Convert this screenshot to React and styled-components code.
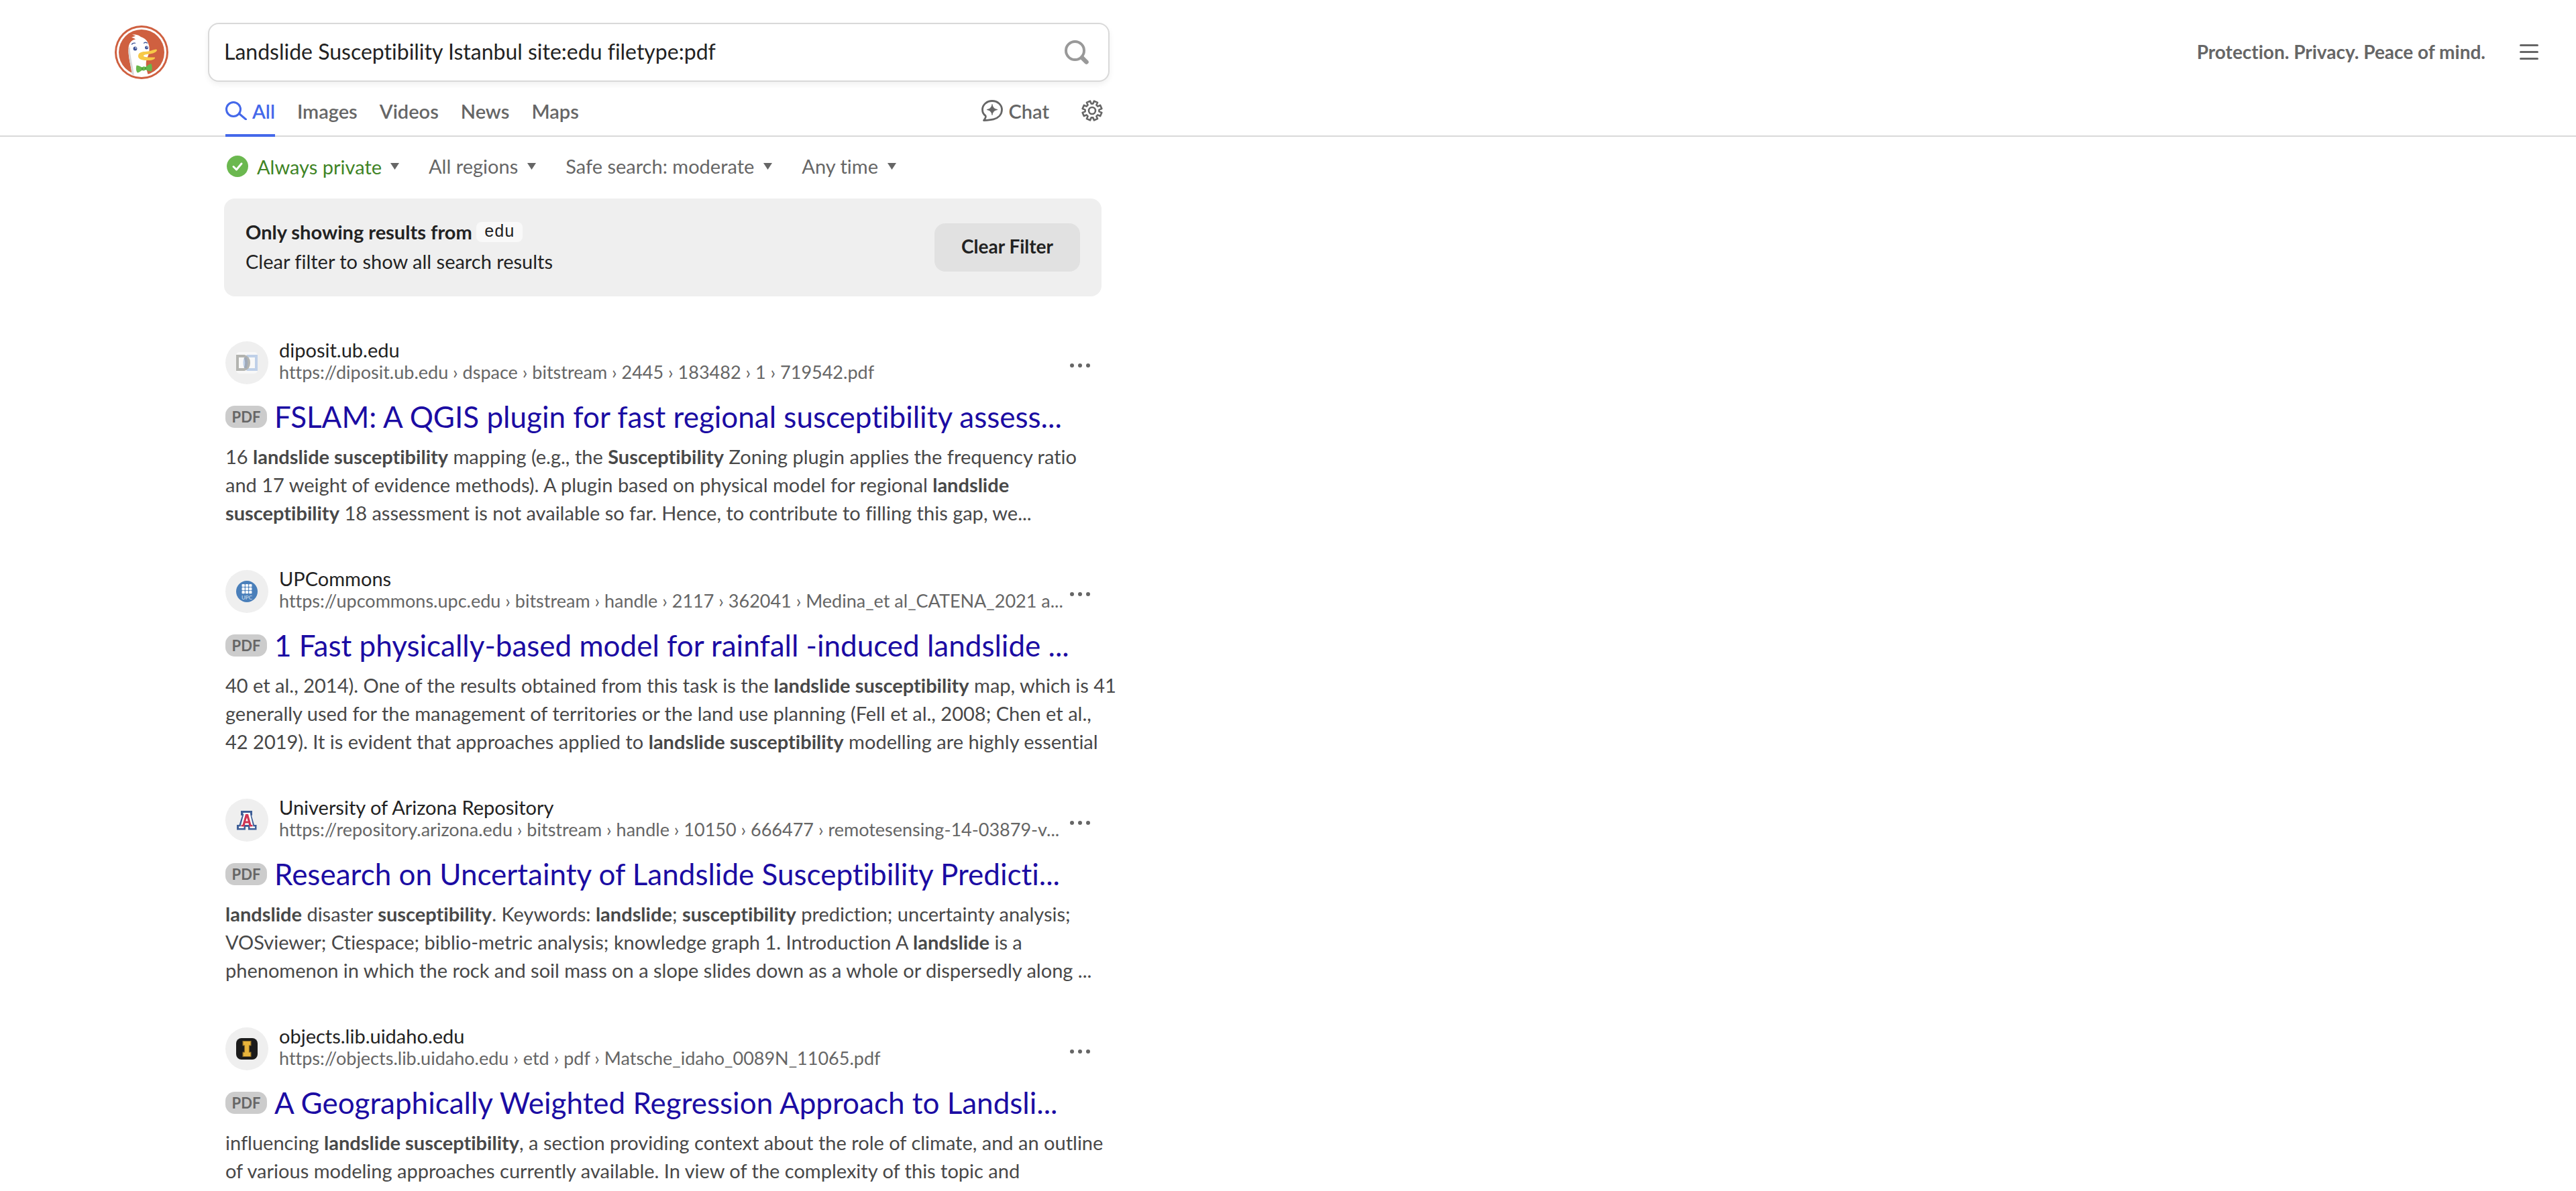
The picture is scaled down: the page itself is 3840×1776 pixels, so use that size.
import React from "react";
import styled, { createGlobalStyle } from "styled-components";

const GlobalStyle = createGlobalStyle`
  *, *::before, *::after { box-sizing: border-box; }
  body {
    margin: 0;
    background: #fff;
    color: #222;
    font-family: Lato, "Liberation Sans", sans-serif;
    font-size: 29px;
    font-variant-ligatures: none;
  }
  button, input, select {
    font: inherit;
    font-variant-ligatures: none;
    color: inherit;
  }
  button {
    padding: 0;
    border: 0;
    background: none;
    cursor: pointer;
  }
  a { color: inherit; text-decoration: none; }
  svg { display: block; flex: none; }
`;

/* ---------- header ---------- */

const Header = styled.header`
  padding: 34px 56px 0 171px;
  border-bottom: 2px solid #d9d9d9;
`;

const TopBar = styled.div`
  display: flex;
  align-items: center;
`;

const LogoLink = styled.a`
  flex: none;
  margin-right: 59px;
`;

const SearchForm = styled.form`
  display: flex;
  align-items: center;
  flex: 1;
  max-width: 1344px;
  height: 88px;
  padding: 0 29px 0 22px;
  border: 2px solid #d9d9d9;
  border-radius: 16px;
  background: #fff;
  box-shadow: 0 4px 8px rgba(0, 0, 0, 0.06);
`;

const SearchInput = styled.input`
  flex: 1;
  min-width: 0;
  padding: 0 0 2px;
  border: 0;
  outline: 0;
  background: none;
  font-size: 32px;
  line-height: 40px;
`;

const SiteMenu = styled.div`
  display: flex;
  align-items: center;
  gap: 51px;
  margin-left: auto;
  color: #666;
`;

const Tagline = styled.a`
  padding-bottom: 2px;
  font-size: 28px;
  font-weight: 700;
  line-height: 36px;
  white-space: nowrap;
`;

const TabBar = styled.div`
  display: flex;
  justify-content: space-between;
  max-width: 1473px;
  height: 82px;
  margin-bottom: -2px;
  padding-left: 165px;
  color: #666;
`;

const TabGroup = styled.nav`
  display: flex;
  gap: ${(p) => p.$gap}px;
`;

const Tab = styled.a`
  display: flex;
  align-items: center;
  gap: 8px;
  padding-top: 4px;
  font-size: 29px;
  font-weight: 600;
  color: ${(p) => (p.$active ? "#4468ea" : "#666")};
  box-shadow: ${(p) => (p.$active ? "inset 0 -4px #4468ea" : "none")};
`;

/* ---------- filters ---------- */

const Main = styled.main`
  max-width: 1642px;
  padding-left: 334px;
`;

const FilterBar = styled.div`
  display: flex;
  align-items: center;
  gap: 44px;
  height: 88px;
  margin-bottom: 4px;
  padding: 0 4px;
  color: #666;
`;

const PrivacyButton = styled.button`
  display: flex;
  align-items: center;
  gap: 13px;
  color: #3f8426;
`;

const DropDown = styled.label`
  display: flex;
  align-items: center;
  gap: 14px;
`;

const Select = styled.select`
  appearance: none;
  field-sizing: content;
  padding: 0;
  border: 0;
  background: none;
  line-height: 36px;
  cursor: pointer;
`;

/* ---------- site notice ---------- */

const Notice = styled.section`
  display: flex;
  align-items: center;
  justify-content: space-between;
  min-height: 146px;
  padding: 0 32px;
  border-radius: 16px;
  background: #efefef;
`;

const NoticeText = styled.div`
  padding-bottom: 2px;
  line-height: 44px;
`;

const NoticeLine = styled.div`
  display: flex;
  align-items: center;
  gap: 6px;
`;

const SiteChip = styled.code`
  padding: 2px 12px 0;
  border-radius: 8px;
  background: #f9f9f9;
  font-family: "Liberation Mono", monospace;
  font-size: 25px;
  line-height: 28px;
`;

const ClearButton = styled.button`
  height: 72px;
  padding: 0 40px 4px;
  border-radius: 16px;
  background: #e1e1e1;
  font-size: 28px;
  font-weight: 700;
`;

/* ---------- results ---------- */

const Results = styled.ol`
  display: flex;
  flex-direction: column;
  gap: 58px;
  margin: 61px 0 0;
  padding: 0 0 0 2px;
  list-style: none;
`;

const SourceRow = styled.div`
  display: flex;
  align-items: flex-end;
  height: 70px;
  margin-bottom: 22px;
`;

const IconDisc = styled.span`
  display: grid;
  place-items: center;
  flex: none;
  width: 64px;
  height: 64px;
  margin-right: 16px;
  border-radius: 50%;
  background: #efefef;
`;

const SourceText = styled.div`
  flex: 1;
  min-width: 0;
  padding-bottom: 2px;
  white-space: nowrap;
`;

const SourceName = styled.a`
  display: block;
  line-height: 34px;
`;

const SourceUrl = styled.a`
  display: block;
  font-size: 27px;
  line-height: 32px;
  color: #666;
`;

const MoreButton = styled.button`
  display: grid;
  place-items: center;
  width: 48px;
  height: 56px;
  margin-right: 8px;
  color: #666;
`;

const TitleRow = styled.div`
  display: flex;
  align-items: center;
  gap: 11px;
  height: 52px;
  margin-bottom: 13px;
`;

const FileBadge = styled.span`
  width: 62px;
  height: 33px;
  border-radius: 14px;
  background: #ccc;
  color: #666;
  font-size: 22px;
  font-weight: 700;
  line-height: 33px;
  text-align: center;
`;

const Title = styled.h2`
  margin: 0;
  font-size: 44px;
  font-weight: 400;
  line-height: 52px;
  white-space: nowrap;
  color: #1b0ca3;
`;

const Snippet = styled.p`
  margin: 0;
  line-height: 42px;
  color: #484848;
`;

const SnippetLine = styled.span`
  display: block;
  white-space: nowrap;
`;

/* ---------- drawings ---------- */

const DuckLogo = () => (
  <svg width="80" height="80" viewBox="0 0 80 80" aria-hidden="true">
    <defs>
      <clipPath id="disc"><circle cx="40" cy="40" r="36" /></clipPath>
    </defs>
    <circle cx="40" cy="40" r="40" fill="#cf6040" />
    <circle cx="40" cy="40" r="37" fill="#fff" />
    <circle cx="40" cy="40" r="34" fill="#cf6040" />
    <g clipPath="url(#disc)">
      <path d="M26 76 C25 62 20 48 20.500 36 C20.500 27 24 22 31 20.500 C29 19 27 18 25 18 C28 16.500 30 16.500 31 15.500 L26 13.500 C33 13 37 15 39 17 C46 19 51 25 51.500 33 C52 42 49 46 47 53 C46 61 48 68 50 74 Z" fill="#fff" />
      <path d="M20.500 36 C20 48 25 62 26 76 L29 76 C28 62 23 49 22.500 30 Z" fill="#d8d8d8" />
    </g>
    <circle cx="30.500" cy="34.500" r="2.900" fill="#3f5597" />
    <circle cx="31.500" cy="33.500" r="0.900" fill="#fff" />
    <circle cx="47.500" cy="33" r="2.500" fill="#3f5597" />
    <circle cx="48.300" cy="32.200" r="0.800" fill="#fff" />
    <path d="M25.500 28 Q27.500 25.500 30.500 26.300 M43.500 26.200 Q46 24.300 48.500 26.200" fill="none" stroke="#3f5597" strokeWidth="1.300" strokeLinecap="round" />
    <path d="M35 46 C35 41 39 39 45 39 C52 39 57 36 62 35.500 C64.500 36.500 62 40 57 41.500 C51 43.500 44 42.500 43 45 C42 48 54 47.500 60 47.500 C61 50 56 52 51 52 C43 52.500 35 51 35 46 Z" fill="#f7c948" />
    <path d="M32.500 59.500 C36 59.500 38 61 41 62.500 C42 61 45 61 46 62 C49 59.500 52 57 54.500 57 C56 60 56 65 55 68.500 C52 68 49 67.500 46 66 C45 67.500 42 68 41 66.500 C39 68 36 70 34 70.500 C31.500 68 31.500 63 32.500 59.500 Z" fill="#67b84c" />
    <path d="M41 62.500 V66.500 M46 62 V66" stroke="#3f9034" strokeWidth="1.200" />
  </svg>
);

const Magnifier = () => (
  <svg width="36" height="36" viewBox="0 0 36 36" fill="none" stroke="#999" aria-hidden="true">
    <circle cx="15.500" cy="15.500" r="13.500" strokeWidth="4" />
    <path d="M26 26 L32.500 32.500" strokeWidth="6.500" strokeLinecap="round" />
  </svg>
);

const TabSearchIcon = () => (
  <svg width="32" height="28" viewBox="0 0 32 28" fill="none" stroke="currentColor" strokeWidth="3" aria-hidden="true">
    <circle cx="12" cy="12" r="10.500" />
    <path d="M20.500 18.500 L30.500 27" strokeLinecap="round" />
  </svg>
);

const ChatIcon = () => (
  <svg width="32" height="32" viewBox="0 0 32 32" fill="none" aria-hidden="true">
    <path d="M16 1.500 C24 1.500 30.500 7 30.500 14.500 C30.500 22 25 27 18 28.800 C13 30 8 30.300 3.500 30.500 C5.500 28 7.500 25.500 6 23.500 C3 21.500 1.500 18.500 1.500 14.500 C1.500 7 8 1.500 16 1.500 Z" stroke="currentColor" strokeWidth="2.800" strokeLinejoin="round" />
    <path d="M16 6.500 C17 11.500 19 13.500 24 14.500 C19 15.500 17 17.500 16 22.500 C15 17.500 13 15.500 8 14.500 C13 13.500 15 11.500 16 6.500 Z" fill="currentColor" stroke="currentColor" strokeWidth="0.800" strokeLinejoin="round" />
  </svg>
);

const gearPoints = Array.from({ length: 8 }, (_, tooth) => {
  const mid = (tooth + 0.5) * 45;
  return [[-15, 10.5], [-11, 14.6], [11, 14.6], [15, 10.5]]
    .map(([turn, radius]) => {
      const a = ((mid + turn - 90) * Math.PI) / 180;
      return `${(16 + radius * Math.cos(a)).toFixed(2)},${(16 + radius * Math.sin(a)).toFixed(2)}`;
    })
    .join(" ");
}).join(" ");

const GearIcon = () => (
  <svg width="32" height="32" viewBox="0 0 32 32" fill="none" stroke="currentColor" strokeWidth="2.600" strokeLinejoin="round" aria-hidden="true">
    <polygon points={gearPoints} />
    <circle cx="16" cy="16" r="5" />
  </svg>
);

const MenuIcon = () => (
  <svg width="28" height="24" viewBox="0 0 28 24" stroke="currentColor" strokeWidth="3" strokeLinecap="round" aria-hidden="true">
    <path d="M1.500 1.500 H26.500 M1.500 11.500 H26.500 M1.500 21.500 H26.500" />
  </svg>
);

const CheckIcon = () => (
  <svg width="32" height="32" viewBox="0 0 32 32" aria-hidden="true">
    <circle cx="16" cy="16" r="16" fill="#6bb84f" />
    <path d="M10 16.500 L14.500 21 L22 12" fill="none" stroke="#fff" strokeWidth="3" strokeLinecap="round" strokeLinejoin="round" />
  </svg>
);

const Caret = () => (
  <svg width="13" height="10" viewBox="0 0 13 10" aria-hidden="true">
    <path d="M0 0 H13 L6.500 10 Z" fill="#666" />
  </svg>
);

const DotsIcon = () => (
  <svg width="30" height="8" viewBox="0 0 30 8" fill="currentColor" aria-hidden="true">
    <circle cx="3" cy="4" r="3" />
    <circle cx="15" cy="4" r="3" />
    <circle cx="27" cy="4" r="3" />
  </svg>
);

const DipositIcon = () => (
  <svg width="32" height="32" viewBox="0 0 32 32" fill="none" strokeWidth="4" aria-hidden="true">
    <rect width="32" height="32" rx="5" fill="#f8f8f8" />
    <path d="M17 6 H30 V26 H17 Q12 22 12.500 16 Q12 10 17 6 Z" stroke="#bfd0e8" />
    <path d="M2 6 H12 Q19 8 19 16 Q19 24 12 26 H2 Z" stroke="#b3b4b0" />
    <path d="M13.500 8 Q17 16 13.500 24" stroke="#9fa9b8" />
  </svg>
);

const UpcIcon = () => (
  <svg width="32" height="32" viewBox="0 0 32 32" aria-hidden="true">
    <circle cx="16" cy="16" r="16" fill="#4a7fba" />
    {[5, 10, 15].map((y) => [8.5, 13.8, 19.1].map((x) => (
      <rect key={`${x}-${y}`} x={x} y={y} width="4.400" height="4.200" rx="1" fill="#f4f7fb" />
    )))}
    <text x="16" y="28" textAnchor="middle" fontFamily="Lato, sans-serif" fontWeight="700" fontSize="8" fill="#b9cfe6">UPC</text>
  </svg>
);

const ArizonaIcon = () => (
  <svg width="32" height="32" viewBox="0 0 32 32" strokeLinejoin="round" aria-hidden="true">
    <path d="M7 2 H24 V9 H23 L27 23 H30.500 V30.500 H18 V26 H14 V30.500 H1 V23 H4.500 L9 9 H7 Z" fill="#3f5f97" />
    <path d="M10.500 5 H21 V7 L25.500 25.500 H28 V28 H20.500 V23 H11.500 V28 H4 V25.500 H6.500 L11.500 7 H10.500 Z" fill="#fff" />
    <path d="M14 7 H18 L22.500 23 H24.500 V25.500 H19.500 L18.500 20.500 H13.500 L12.500 25.500 H7.500 V23 H9.500 Z M16 12 L14.300 17.500 H17.700 Z" fill="#cf3553" fillRule="evenodd" />
  </svg>
);

const IdahoIcon = () => (
  <svg width="32" height="32" viewBox="0 0 32 32" aria-hidden="true">
    <rect width="32" height="32" rx="8" fill="#1b1b1b" />
    <path d="M10 4.500 H22 V11 H19.500 V21 H22 V27.500 H10 V21 H12.500 V11 H10 Z" fill="#e8b43c" stroke="#8a6a24" strokeWidth="1.200" />
  </svg>
);

/* ---------- content ---------- */

const results = [
  {
    icon: <DipositIcon />,
    name: "diposit.ub.edu",
    url: "https://diposit.ub.edu › dspace › bitstream › 2445 › 183482 › 1 › 719542.pdf",
    title: "FSLAM: A QGIS plugin for fast regional susceptibility assess...",
    lines: [
      <>16 <b>landslide susceptibility</b> mapping (e.g., the <b>Susceptibility</b> Zoning plugin applies the frequency ratio</>,
      <>and 17 weight of evidence methods). A plugin based on physical model for regional <b>landslide</b></>,
      <><b>susceptibility</b> 18 assessment is not available so far. Hence, to contribute to filling this gap, we...</>,
    ],
  },
  {
    icon: <UpcIcon />,
    name: "UPCommons",
    url: "https://upcommons.upc.edu › bitstream › handle › 2117 › 362041 › Medina_et al_CATENA_2021 a...",
    title: "1 Fast physically-based model for rainfall -induced landslide ...",
    lines: [
      <>40 et al., 2014). One of the results obtained from this task is the <b>landslide susceptibility</b> map, which is 41</>,
      <>generally used for the management of territories or the land use planning (Fell et al., 2008; Chen et al.,</>,
      <>42 2019). It is evident that approaches applied to <b>landslide susceptibility</b> modelling are highly essential</>,
    ],
  },
  {
    icon: <ArizonaIcon />,
    name: "University of Arizona Repository",
    url: "https://repository.arizona.edu › bitstream › handle › 10150 › 666477 › remotesensing-14-03879-v...",
    title: "Research on Uncertainty of Landslide Susceptibility Predicti...",
    lines: [
      <><b>landslide</b> disaster <b>susceptibility</b>. Keywords: <b>landslide</b>; <b>susceptibility</b> prediction; uncertainty analysis;</>,
      <>VOSviewer; Ctiespace; biblio-metric analysis; knowledge graph 1. Introduction A <b>landslide</b> is a</>,
      <>phenomenon in which the rock and soil mass on a slope slides down as a whole or dispersedly along ...</>,
    ],
  },
  {
    icon: <IdahoIcon />,
    name: "objects.lib.uidaho.edu",
    url: "https://objects.lib.uidaho.edu › etd › pdf › Matsche_idaho_0089N_11065.pdf",
    title: "A Geographically Weighted Regression Approach to Landsli...",
    lines: [
      <>influencing <b>landslide susceptibility</b>, a section providing context about the role of climate, and an outline</>,
      <>of various modeling approaches currently available. In view of the complexity of this topic and</>,
    ],
  },
];

const dropDowns = [
  { name: "Region", value: "All regions" },
  { name: "Safe search", value: "Safe search: moderate" },
  { name: "Time range", value: "Any time" },
];

const Result = ({ icon, name, url, title, lines }) => (
  <li>
    <SourceRow>
      <IconDisc>{icon}</IconDisc>
      <SourceText>
        <SourceName href="#">{name}</SourceName>
        <SourceUrl href="#">{url}</SourceUrl>
      </SourceText>
      <MoreButton type="button" aria-label="More options"><DotsIcon /></MoreButton>
    </SourceRow>
    <TitleRow>
      <FileBadge>PDF</FileBadge>
      <Title><a href="#">{title}</a></Title>
    </TitleRow>
    <Snippet>
      {lines.map((line, i) => <SnippetLine key={i}>{line} </SnippetLine>)}
    </Snippet>
  </li>
);

export default function App() {
  return (
    <>
      <GlobalStyle />
      <Header>
        <TopBar>
          <LogoLink href="#" aria-label="DuckDuckGo home"><DuckLogo /></LogoLink>
          <SearchForm role="search" onSubmit={(e) => e.preventDefault()}>
            <SearchInput aria-label="Search" defaultValue="Landslide Susceptibility Istanbul site:edu filetype:pdf" />
            <button type="submit" aria-label="Submit search"><Magnifier /></button>
          </SearchForm>
          <SiteMenu>
            <Tagline href="#">Protection. Privacy. Peace of mind.</Tagline>
            <button type="button" aria-label="Menu"><MenuIcon /></button>
          </SiteMenu>
        </TopBar>
        <TabBar>
          <TabGroup $gap={33} aria-label="Result types">
            <Tab href="#" $active aria-current="page"><TabSearchIcon />All</Tab>
            <Tab href="#">Images</Tab>
            <Tab href="#">Videos</Tab>
            <Tab href="#">News</Tab>
            <Tab href="#">Maps</Tab>
          </TabGroup>
          <TabGroup $gap={48} aria-label="Tools">
            <Tab href="#"><ChatIcon />Chat</Tab>
            <Tab href="#" aria-label="Settings"><GearIcon /></Tab>
          </TabGroup>
        </TabBar>
      </Header>
      <Main>
        <FilterBar>
          <PrivacyButton type="button"><CheckIcon />Always private<Caret /></PrivacyButton>
          {dropDowns.map((d) => (
            <DropDown key={d.name}>
              <Select aria-label={d.name}><option>{d.value}</option></Select>
              <Caret />
            </DropDown>
          ))}
        </FilterBar>
        <Notice>
          <NoticeText>
            <NoticeLine><b>Only showing results from</b><SiteChip>edu</SiteChip></NoticeLine>
            <NoticeLine>Clear filter to show all search results</NoticeLine>
          </NoticeText>
          <ClearButton type="button">Clear Filter</ClearButton>
        </Notice>
        <Results>
          {results.map((r) => <Result key={r.name} {...r} />)}
        </Results>
      </Main>
    </>
  );
}
